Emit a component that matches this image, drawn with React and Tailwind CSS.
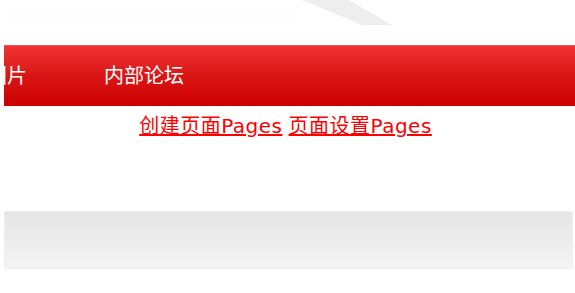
import React from "react";

const navItems = ["图片", "内部论坛"];

const HeaderArt = () => (
  <svg width="571" height="45" viewBox="0 0 571 45" className="block">
    <rect x="2" y="4" width="290" height="20" fill="#fefefe" />
    <polygon points="298,0 345,0 388,25 358,25" fill="#eeeeee" />
  </svg>
);

export default function App() {
  return (
    <div
      className="w-[575px] h-[293px] bg-white pl-[4px] overflow-hidden"
      style={{ fontFamily: '"DejaVu Sans", "Noto Sans CJK SC", sans-serif' }}
    >
      {/* Header banner */}
      <div className="h-[45px]">
        <HeaderArt />
      </div>

      {/* Red navigation bar */}
      <div className="h-[61px] border-t border-[#f05555] bg-linear-to-b from-[#ee3232] via-[#da1414] to-[#cc0000] overflow-hidden flex items-center">
        <ul className="flex gap-[77px] ml-[-17px] text-white text-[20px] leading-none whitespace-nowrap">
          {navItems.map((item) => (
            <li key={item}>{item}</li>
          ))}
        </ul>
      </div>

      {/* Page links */}
      <div className="h-[105px] pt-[9px] pr-[8px] flex justify-center gap-[6px] text-[20px] leading-[22px] tracking-[0.5px] text-[#ff0000]">
        <a href="#" className="underline">创建页面Pages</a>
        <a href="#" className="underline">页面设置Pages</a>
      </div>

      {/* Gray footer bar */}
      <div className="w-[569px] h-[58px] border border-[#efefef] bg-linear-to-b from-[#e5e5e5] to-[#f4f4f4]" />
    </div>
  );
}
